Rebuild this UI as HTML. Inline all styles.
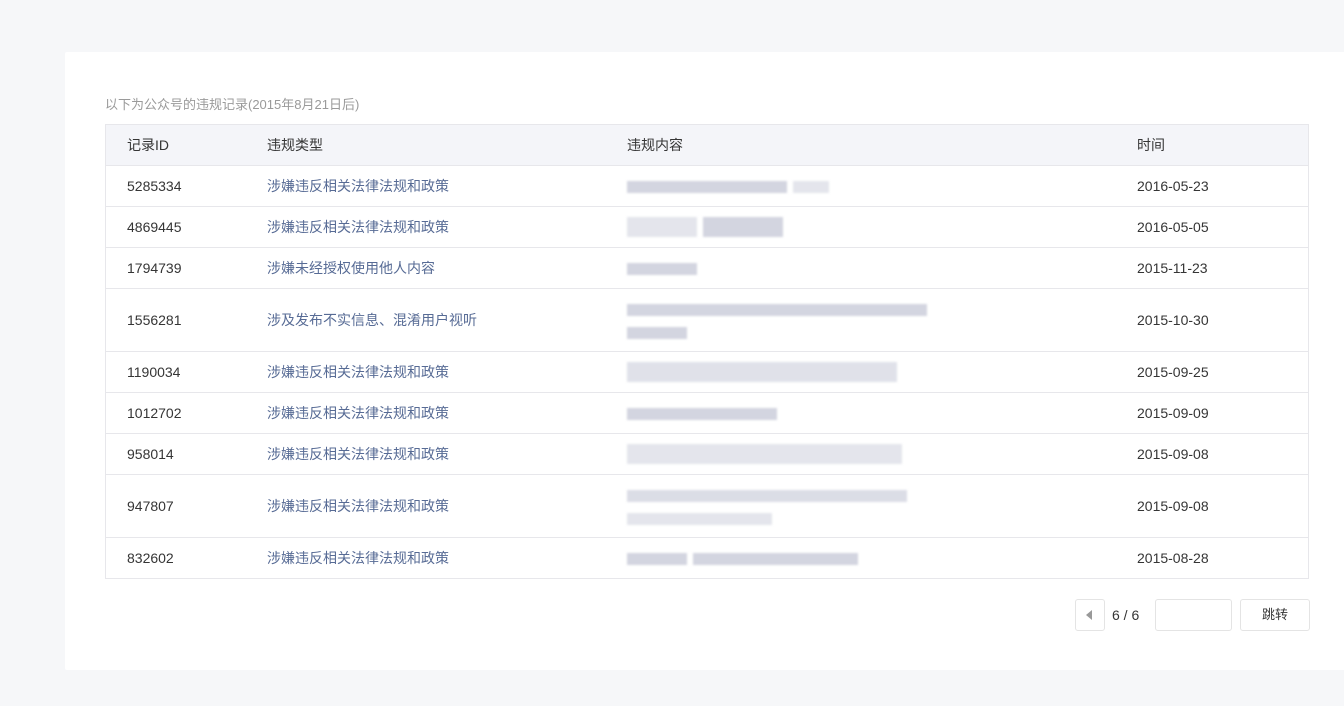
<!DOCTYPE html><html><head><meta charset="utf-8"><style>
body{margin:0;width:1344px;height:706px;background:#f6f7f9;font-family:"Liberation Sans","Noto Sans CJK SC",sans-serif;overflow:hidden;position:relative}
.card{position:absolute;left:65px;top:52px;width:1300px;height:618px;background:#fff;border-radius:2px}
.cap{position:absolute;left:105px;top:94px;font-size:13px;color:#9a9a9a}
table{position:absolute;left:105px;top:124px;width:1204px;border-collapse:collapse;font-size:14px;color:#353535}
td,th{border-bottom:1px solid #e7e7eb;padding:0;text-align:left;font-weight:normal;vertical-align:middle}
tr td:first-child,tr th:first-child{padding-left:21px}
table{border:1px solid #e7e7eb}
th{background:#f4f5f9;height:40px}
td{height:40px}
tr.t td{height:62px}
.ty{color:#576b95}
.bl{display:inline-block;height:12px;background:#d3d5e0;filter:blur(1px);margin-right:6px;vertical-align:middle}
.pg{position:absolute;top:599px;height:32px;border:1px solid #e4e4e4;border-radius:3px;background:#fff;box-sizing:border-box}
</style></head><body>
<div class="card"></div>
<div class="cap">以下为公众号的违规记录(2015年8月21日后)</div>
<table>
<tr><th style="width:140px">记录ID</th><th style="width:360px">违规类型</th><th style="width:510px">违规内容</th><th>时间</th></tr>
<tr><td>5285334</td><td class="ty">涉嫌违反相关法律法规和政策</td><td><span class="bl" style="width:160px"></span><span class="bl" style="width:36px;opacity:.6"></span></td><td>2016-05-23</td></tr>
<tr><td>4869445</td><td class="ty">涉嫌违反相关法律法规和政策</td><td><span class="bl" style="width:70px;height:20px;opacity:.6"></span><span class="bl" style="width:80px;height:20px"></span></td><td>2016-05-05</td></tr>
<tr><td>1794739</td><td class="ty">涉嫌未经授权使用他人内容</td><td><span class="bl" style="width:70px"></span></td><td>2015-11-23</td></tr>
<tr class="t"><td>1556281</td><td class="ty">涉及发布不实信息、混淆用户视听</td><td><span class="bl" style="width:300px"></span><br><span class="bl" style="width:60px;margin-top:10px"></span></td><td>2015-10-30</td></tr>
<tr><td>1190034</td><td class="ty">涉嫌违反相关法律法规和政策</td><td><span class="bl" style="width:270px;height:20px;opacity:.7"></span></td><td>2015-09-25</td></tr>
<tr><td>1012702</td><td class="ty">涉嫌违反相关法律法规和政策</td><td><span class="bl" style="width:150px"></span></td><td>2015-09-09</td></tr>
<tr><td>958014</td><td class="ty">涉嫌违反相关法律法规和政策</td><td><span class="bl" style="width:275px;height:20px;opacity:.6"></span></td><td>2015-09-08</td></tr>
<tr class="t"><td>947807</td><td class="ty">涉嫌违反相关法律法规和政策</td><td><span class="bl" style="width:280px;opacity:.8"></span><br><span class="bl" style="width:145px;margin-top:10px;opacity:.6"></span></td><td>2015-09-08</td></tr>
<tr><td>832602</td><td class="ty">涉嫌违反相关法律法规和政策</td><td><span class="bl" style="width:60px"></span><span class="bl" style="width:165px"></span></td><td>2015-08-28</td></tr>
</table>
<div class="pg" style="left:1075px;width:30px"><div style="position:absolute;left:10px;top:10px;width:0;height:0;border-top:5px solid transparent;border-bottom:5px solid transparent;border-right:6px solid #999"></div></div>
<div style="position:absolute;left:1112px;top:607px;font-size:14px;color:#353535">6 / 6</div>
<div class="pg" style="left:1155px;width:77px"></div>
<div class="pg" style="left:1240px;width:70px;font-size:13px;color:#353535;text-align:center;line-height:30px">跳转</div>
</body></html>
